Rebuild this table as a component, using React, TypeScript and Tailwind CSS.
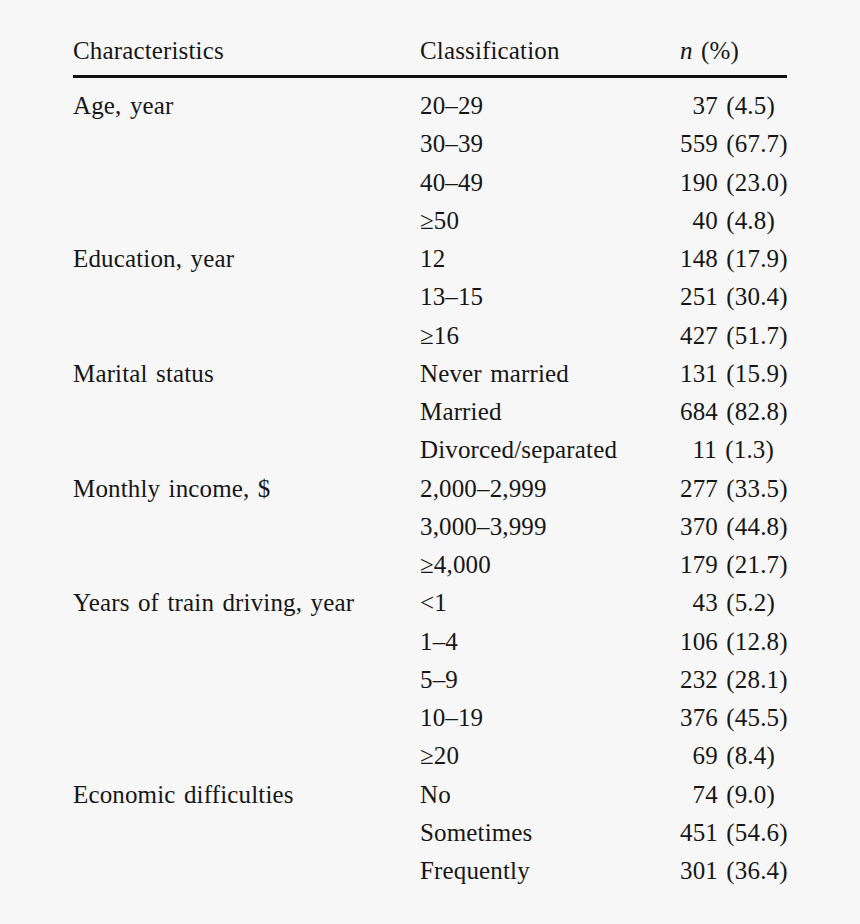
import React from "react";

type Row = { c?: string; k: string; n: string; pad?: boolean };

const rows: Row[] = [
  { c: "Age, year", k: "20–29", n: "37 (4.5)", pad: true },
  { k: "30–39", n: "559 (67.7)" },
  { k: "40–49", n: "190 (23.0)" },
  { k: "≥50", n: "40 (4.8)", pad: true },
  { c: "Education, year", k: "12", n: "148 (17.9)" },
  { k: "13–15", n: "251 (30.4)" },
  { k: "≥16", n: "427 (51.7)" },
  { c: "Marital status", k: "Never married", n: "131 (15.9)" },
  { k: "Married", n: "684 (82.8)" },
  { k: "Divorced/separated", n: "11 (1.3)", pad: true },
  { c: "Monthly income, $", k: "2,000–2,999", n: "277 (33.5)" },
  { k: "3,000–3,999", n: "370 (44.8)" },
  { k: "≥4,000", n: "179 (21.7)" },
  { c: "Years of train driving, year", k: "<1", n: "43 (5.2)", pad: true },
  { k: "1–4", n: "106 (12.8)" },
  { k: "5–9", n: "232 (28.1)" },
  { k: "10–19", n: "376 (45.5)" },
  { k: "≥20", n: "69 (8.4)", pad: true },
  { c: "Economic difficulties", k: "No", n: "74 (9.0)", pad: true },
  { k: "Sometimes", n: "451 (54.6)" },
  { k: "Frequently", n: "301 (36.4)" },
];

export default function App() {
  return (
    <div
      className="w-[860px] h-[924px] bg-[#f7f7f7] text-[#161616] text-[25px] overflow-hidden tracking-[0.15px] [word-spacing:2px]"
      style={{ fontFamily: '"Liberation Serif", "Times New Roman", serif' }}
    >
      <div className="ml-[73px] w-[714px] pt-[32px]">
        <div className="grid grid-cols-[347px_260px_1fr] leading-[38px] h-[38px]">
          <div>Characteristics</div>
          <div>Classification</div>
          <div>
            <span className="italic">n</span> (%)
          </div>
        </div>
        <div className="mt-[5px] h-[3px] bg-[#111]" />
        <div className="mt-[9px]">
          {rows.map((r, i) => (
            <div
              key={i}
              className="grid grid-cols-[347px_260px_1fr] leading-[38.25px] h-[38.25px] whitespace-nowrap"
            >
              <div>{r.c ?? ""}</div>
              <div>{r.k}</div>
              <div className={r.pad ? "pl-[12.5px]" : ""}>{r.n}</div>
            </div>
          ))}
        </div>
      </div>
    </div>
  );
}
